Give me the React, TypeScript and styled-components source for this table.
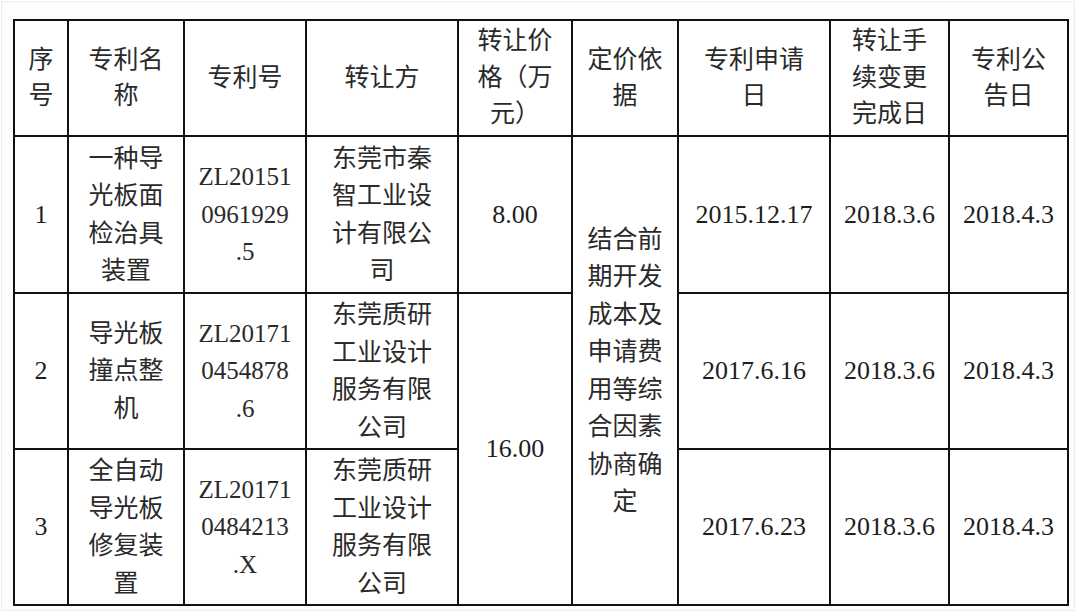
import React from 'react';
import styled, { createGlobalStyle } from 'styled-components';

const GlobalStyle = createGlobalStyle`
  html, body {
    margin: 0;
    padding: 0;
    background: #ffffff;
  }
`;

const Page = styled.div`
  box-sizing: border-box;
  width: 1074px;
  height: 610px;
  margin: 1px 0 0 1px;
  border: 1px solid #ececec;
  padding: 17px 0 0 11px;
  background: #fdfdfe;
`;

const Table = styled.table`
  border-collapse: collapse;
  table-layout: fixed;
  width: 1056px;
  font-family: "Liberation Serif", "Noto Sans CJK SC", serif;
  font-size: 25px;
  color: #2a2a2a;
  background: #ffffff;
`;

const Row = styled.tr<{ $h: number }>`
  height: ${(p) => p.$h}px;
`;

const Cell = styled.td`
  border: 2px solid #111111;
  padding: 0 2px;
  text-align: center;
  vertical-align: middle;
  line-height: 37.5px;
  white-space: nowrap;
`;

// price and date cells use slightly larger figures
const NumCell = styled(Cell)`
  font-size: 26px;
  color: #1e1e1e;
`;

const HeadCell = styled(Cell).attrs({ as: 'th' })`
  font-weight: normal;
  line-height: 36.5px;
`;

const Line = styled.span`
  display: block;
`;

const Lines = ({ text }: { text: string }) => (
  <>
    {text.split('\n').map((t, i) => (
      <Line key={i}>{t}</Line>
    ))}
  </>
);

const widths = [54, 116, 122, 152, 114, 106, 152, 119, 119];

const headers = [
  '序\n号',
  '专利名\n称',
  '专利号',
  '转让方',
  '转让价\n格（万\n元）',
  '定价依\n据',
  '专利申请\n日',
  '转让手\n续变更\n完成日',
  '专利公\n告日',
];

const App = () => {
  return (
    <>
      <GlobalStyle />
      <Page>
        <Table>
          <colgroup>
            {widths.map((w, i) => (
              <col key={i} style={{ width: w }} />
            ))}
          </colgroup>
          <thead>
            <Row $h={116}>
              {headers.map((h, i) => (
                <HeadCell key={i}>
                  <Lines text={h} />
                </HeadCell>
              ))}
            </Row>
          </thead>
          <tbody>
            <Row $h={157}>
              <NumCell>1</NumCell>
              <Cell><Lines text={'一种导\n光板面\n检治具\n装置'} /></Cell>
              <Cell><Lines text={'ZL20151\n0961929\n.5'} /></Cell>
              <Cell><Lines text={'东莞市秦\n智工业设\n计有限公\n司'} /></Cell>
              <NumCell>8.00</NumCell>
              <Cell rowSpan={3}>
                <Lines text={'结合前\n期开发\n成本及\n申请费\n用等综\n合因素\n协商确\n定'} />
              </Cell>
              <NumCell>2015.12.17</NumCell>
              <NumCell>2018.3.6</NumCell>
              <NumCell>2018.4.3</NumCell>
            </Row>
            <Row $h={156}>
              <NumCell>2</NumCell>
              <Cell><Lines text={'导光板\n撞点整\n机'} /></Cell>
              <Cell><Lines text={'ZL20171\n0454878\n.6'} /></Cell>
              <Cell><Lines text={'东莞质研\n工业设计\n服务有限\n公司'} /></Cell>
              <NumCell rowSpan={2}>16.00</NumCell>
              <NumCell>2017.6.16</NumCell>
              <NumCell>2018.3.6</NumCell>
              <NumCell>2018.4.3</NumCell>
            </Row>
            <Row $h={156}>
              <NumCell>3</NumCell>
              <Cell><Lines text={'全自动\n导光板\n修复装\n置'} /></Cell>
              <Cell><Lines text={'ZL20171\n0484213\n.X'} /></Cell>
              <Cell><Lines text={'东莞质研\n工业设计\n服务有限\n公司'} /></Cell>
              <NumCell>2017.6.23</NumCell>
              <NumCell>2018.3.6</NumCell>
              <NumCell>2018.4.3</NumCell>
            </Row>
          </tbody>
        </Table>
      </Page>
    </>
  );
};

export default App;
